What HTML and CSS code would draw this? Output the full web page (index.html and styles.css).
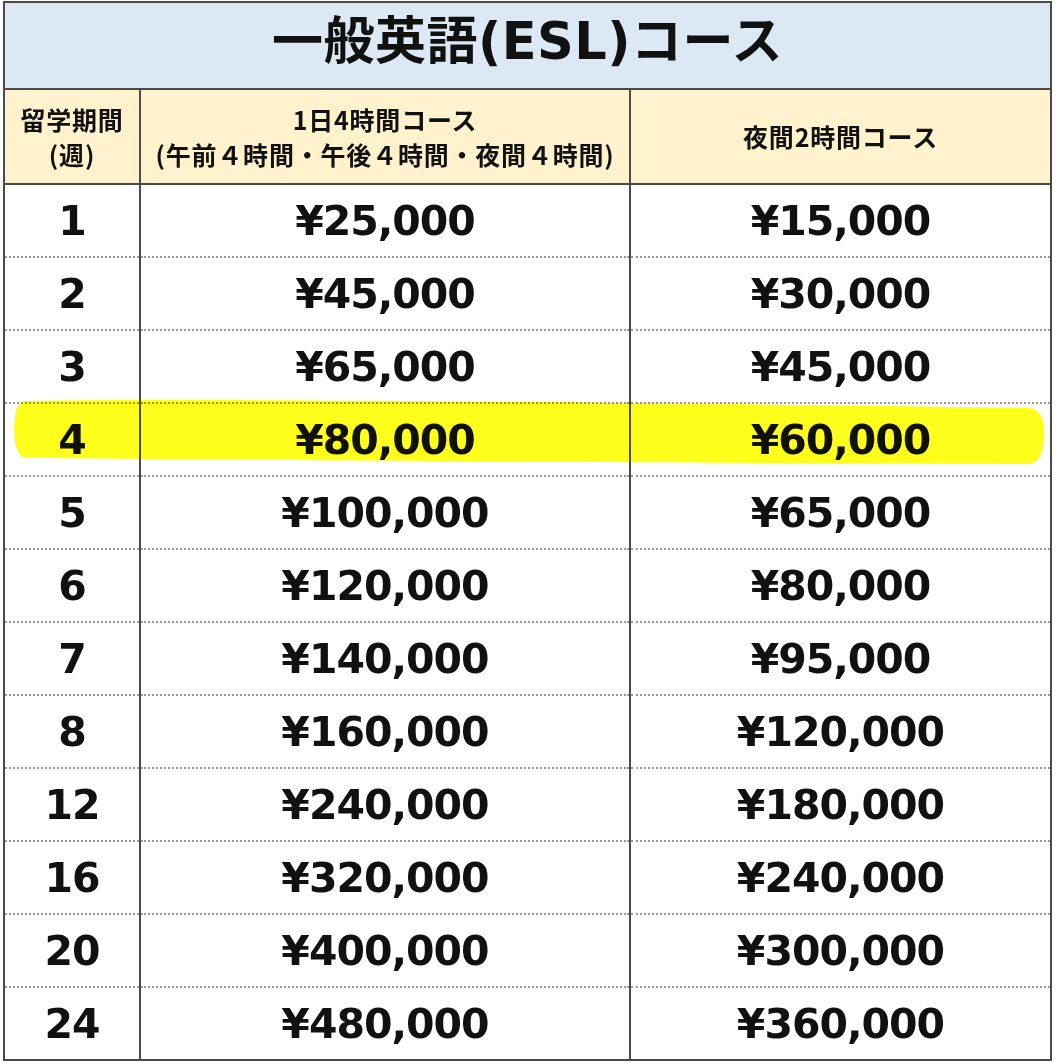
FILE: index.html
```html
<!DOCTYPE html>
<html lang="ja">
<head>
<meta charset="utf-8">
<link rel="stylesheet" href="styles.css">
</head>
<body>
<div class="wrap">
<table class="price">
  <colgroup><col class="c1"><col class="c2"><col class="c3"></colgroup>
  <thead>
    <tr class="title"><th colspan="3">一般英語(ESL)コース</th></tr>
    <tr class="head">
      <th>留学期間<br>(週)</th>
      <th>1日4時間コース<br>(午前４時間・午後４時間・夜間４時間)</th>
      <th>夜間2時間コース</th>
    </tr>
  </thead>
  <tbody>
    <tr><td>1</td><td>¥25,000</td><td>¥15,000</td></tr>
    <tr><td>2</td><td>¥45,000</td><td>¥30,000</td></tr>
    <tr><td>3</td><td>¥65,000</td><td>¥45,000</td></tr>
    <tr class="hl"><td>4</td><td>¥80,000</td><td>¥60,000</td></tr>
    <tr><td>5</td><td>¥100,000</td><td>¥65,000</td></tr>
    <tr><td>6</td><td>¥120,000</td><td>¥80,000</td></tr>
    <tr><td>7</td><td>¥140,000</td><td>¥95,000</td></tr>
    <tr><td>8</td><td>¥160,000</td><td>¥120,000</td></tr>
    <tr><td>12</td><td>¥240,000</td><td>¥180,000</td></tr>
    <tr><td>16</td><td>¥320,000</td><td>¥240,000</td></tr>
    <tr><td>20</td><td>¥400,000</td><td>¥300,000</td></tr>
    <tr><td>24</td><td>¥480,000</td><td>¥360,000</td></tr>
  </tbody>
</table>
<svg class="marker" width="1056" height="1063" viewBox="0 0 1056 1063" aria-hidden="true">
  <path d="M 24 401 C 250 398, 650 403, 1030 408 Q 1046 412 1043 436 Q 1044 462 1028 464 C 650 463, 250 460, 26 458 Q 14 456 14 430 Q 14 402 24 401 Z" fill="#ffff1c"/>
</svg>
</div>
</body>
</html>
```
FILE: styles.css
```css
html, body {
  margin: 0;
  padding: 0;
  background: #ffffff;
}
.wrap {
  position: relative;
  width: 1056px;
  height: 1063px;
  padding: 1px 0 0 3px;
  box-sizing: border-box;
}
.price {
  border-collapse: collapse;
  table-layout: fixed;
  width: 1047px;
  color: #111;
  font-family: "DejaVu Sans", "Noto Sans CJK JP", sans-serif;
  font-weight: 700;
  border: 2px solid #4a4a4a;
}
.c1 { width: 136px; }
.c2 { width: 490px; }
.c3 { width: 421px; }
.title th {
  height: 87px;
  padding: 0 0 8px 0;
  box-sizing: border-box;
  background: #dde8f5;
  font-size: 51px;
  line-height: 60px;
  font-weight: 700;
  text-align: center;
  vertical-align: middle;
  border-bottom: 2px solid #4a4a4a;
  letter-spacing: 0.5px;
}
.head th {
  height: 93px;
  padding: 0;
  background: #fff2cc;
  font-family: "Noto Sans CJK JP", sans-serif;
  font-size: 25px;
  line-height: 35px;
  letter-spacing: 0.8px;
  font-weight: 700;
  text-align: center;
  vertical-align: middle;
  border-left: 2px solid #4a4a4a;
  border-bottom: 2px solid #4a4a4a;
}
.head th:first-child { border-left: none; }
tbody td {
  height: 71px;
  padding: 0;
  text-align: center;
  vertical-align: middle;
  font-size: 41px;
  letter-spacing: -1px;
  border-left: 2px solid #4a4a4a;
  border-bottom: 2px dotted #9a9a9a;
}
tbody td:first-child { border-left: none; }
tbody tr:last-child td { border-bottom: none; }
.marker {
  position: absolute;
  left: 0;
  top: 0;
  mix-blend-mode: multiply;
  pointer-events: none;
}
```
